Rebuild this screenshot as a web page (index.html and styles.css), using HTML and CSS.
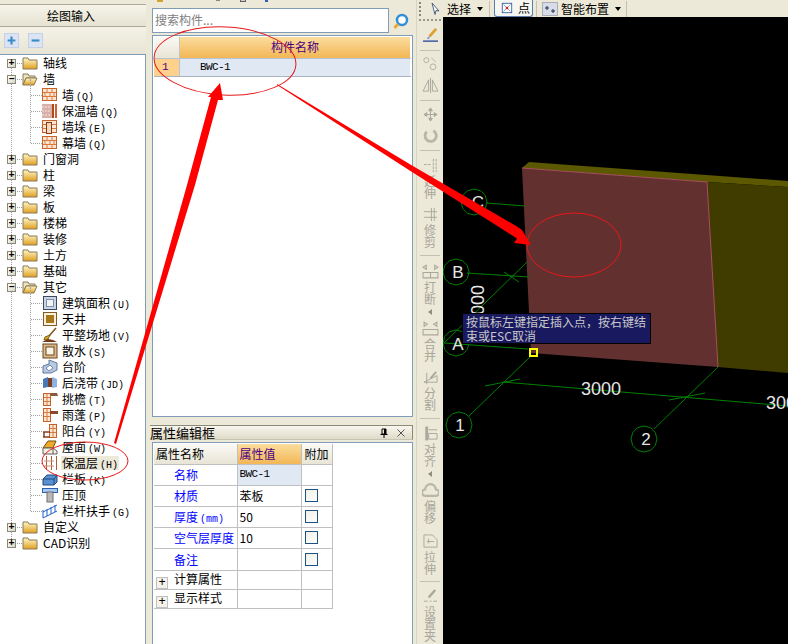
FILE: index.html
```html
<!DOCTYPE html>
<html lang="zh">
<head>
<meta charset="utf-8">
<title>绘图输入</title>
<link rel="stylesheet" href="styles.css">
</head>
<body>
<svg class="defs" width="0" height="0" aria-hidden="true">
  <defs>
    <linearGradient id="fold" x1="0" y1="0" x2="0" y2="1"><stop offset="0" stop-color="#fff6c8"/><stop offset="1" stop-color="#e0a020"/></linearGradient>
    <polygon id="oct" points="13,0 11.300,6.500 6.500,11.300 0,13 -6.500,11.300 -11.300,6.500 -13,0 -11.300,-6.500 -6.500,-11.300 0,-13 6.500,-11.300 11.300,-6.500"/>
    <symbol id="closed" viewBox="0 0 16 14"><path d="M1 2h5l1 2h8v9H1z" fill="url(#fold)" stroke="#8a7a58"/></symbol>
    <symbol id="open" viewBox="0 0 16 14"><path d="M1 2h5l1 2h6v2H4L1 13z" fill="#efe4c0" stroke="#8a7a58"/><path d="M4 6h11l-3 7H1z" fill="url(#fold)" stroke="#8a7a58"/></symbol>
    <symbol id="brick" viewBox="0 0 16 14"><rect x=".5" y=".5" width="14" height="12" fill="#fde6d2" stroke="#c8622a"/><path d="M1 4.500h13M1 8.500h13M5 1v3.500M10 1v3.500M3 4.500v4M8 4.500v4M12 4.500v4M5 8.500v4M10 8.500v4" stroke="#d87a40" fill="none"/></symbol>
    <symbol id="insul" viewBox="0 0 16 14"><rect x="0" y="0" width="10" height="14" fill="#d8b0a8"/><path d="M0 3h9M0 7h9M0 11h9" stroke="#f4e8e0" stroke-dasharray="2 1"/><rect x="10" y="0" width="2" height="14" fill="#b04818"/><rect x="13" y="0" width="2" height="14" fill="#d06030"/></symbol>
    <symbol id="pier" viewBox="0 0 16 14"><rect x=".5" y=".5" width="14" height="12" fill="#fde6d2" stroke="#c8622a"/><path d="M1 4.500h13M1 8.500h13" stroke="#d87a40"/><rect x="4.500" y="2.500" width="5" height="11" fill="#f4d8c0" stroke="#8a3a10"/></symbol>
    <symbol id="area" viewBox="0 0 16 16"><rect x="1.500" y="1.500" width="13" height="13" fill="#c8d4e8" stroke="#404860"/><rect x="4.500" y="4.500" width="7" height="7" fill="#f4f4f4" stroke="#8090a8"/></symbol>
    <symbol id="well" viewBox="0 0 16 16"><rect x="1.500" y="1.500" width="13" height="13" fill="#f8f0dc" stroke="#805a20"/><rect x="4" y="4" width="8" height="8" fill="#a87818"/></symbol>
    <symbol id="shovel" viewBox="0 0 16 16"><path d="M14 1L7 9" stroke="#805018" stroke-width="1.500"/><path d="M8 8L3 10l-1 3 4-1z" fill="#d8b020" stroke="#806010"/><path d="M0 15l6-3 5 1 4 2z" fill="#783818"/></symbol>
    <symbol id="apron" viewBox="0 0 16 16"><rect x="1" y="1" width="14" height="14" fill="#d8b890" stroke="#704818"/><rect x="4" y="4" width="8" height="8" fill="#f8f4e8" stroke="#704818"/></symbol>
    <symbol id="step" viewBox="0 0 16 16"><path d="M1 14V7l6-2V1l8 3v7l-6 3z" fill="#b8c8e0" stroke="#6078a0"/><path d="M4 9l4-3 3 3-4 3z" fill="#fff" stroke="#7088a8"/></symbol>
    <symbol id="post" viewBox="0 0 16 16"><path d="M1 4l5-2v10l-5 1z" fill="#4878b8"/><path d="M10 2l5 2v8l-5 1z" fill="#90b0e0"/><path d="M6 3h4v9H6z" fill="#784020"/></symbol>
    <symbol id="eave" viewBox="0 0 16 16"><rect x="1.500" y="2.500" width="7" height="12" fill="#fde6d2" stroke="#c8622a"/><path d="M2 6.500h6M2 10.500h6M5 3v3M5 7v3M5 11v3" stroke="#d87a40"/><path d="M8 2h7l1 3H9z" fill="#8a5a3a"/></symbol>
    <symbol id="canopy" viewBox="0 0 16 16"><rect x="1.500" y="1.500" width="7" height="13" fill="#fde6d2" stroke="#c8622a"/><path d="M2 5.500h6M2 9.500h6M5 2v3M5 6v3M5 10v4" stroke="#d87a40"/><rect x="8" y="4" width="8" height="3" fill="#8a4a2a"/></symbol>
    <symbol id="balcony" viewBox="0 0 16 16"><rect x="7.500" y="1.500" width="7" height="13" fill="#fde6d2" stroke="#c8622a"/><path d="M8 5.500h6M8 9.500h6M11 2v3M11 6v3M11 10v4" stroke="#d87a40"/><path d="M1 9h7M1 14h7M2 9v5" stroke="#884020" fill="none" stroke-width="1.500"/></symbol>
    <symbol id="roof" viewBox="0 0 16 16"><path d="M1 9l5-7h8l-3 7z" fill="#f0a828" stroke="#705010"/><path d="M1 9h10v6H1zM11 9l4 3v3h-4" fill="#f4f0e4" stroke="#606060"/></symbol>
    <symbol id="layer" viewBox="0 0 16 16"><path d="M4.500 1v14M9.500 1v14M14.500 1v14" stroke="#b05830" fill="none"/><path d="M2 6h5M7 6h5M2 11h5M7 11h5" stroke="#c89078" fill="none"/></symbol>
    <symbol id="board" viewBox="0 0 16 16"><path d="M1 8l4-4h10v7l-3 3H1z" fill="#5890d0" stroke="#204880"/><path d="M1 8h11v6M12 8l3-4" stroke="#204880" fill="none"/></symbol>
    <symbol id="cap" viewBox="0 0 16 16"><rect x="0.500" y="1.500" width="15" height="4" fill="#a8c8f0" stroke="#2860b0"/><rect x="5" y="5" width="6" height="10" fill="#b8b8b8" stroke="#707070"/></symbol>
    <symbol id="rail" viewBox="0 0 16 16"><path d="M1 15V7M1 9l14-7M5 13V6M9 11V4M13 9V2M1 15l14-7" stroke="#2060d0" fill="none"/></symbol>
    <symbol id="grabber" viewBox="0 0 12 16"><path d="M2 2l7 8-3-.500-1 4z" fill="#fff" stroke="#506080"/></symbol>
  </defs>
</svg>

<div class="app">
  <aside class="left">
    <div class="left-title">绘图输入</div>
    <div class="left-tools">
      <button class="sq-btn"><svg viewBox="0 0 15 15"><path d="M7.500 3v9M3 7.500h9" stroke="#3a8cc8" stroke-width="2.500"/></svg></button>
      <button class="sq-btn"><svg viewBox="0 0 15 15"><path d="M3 7.500h9" stroke="#3a8cc8" stroke-width="2.500"/></svg></button>
    </div>
    <div class="tree-box">
      <ul class="tree">
        <li class="row"><span class="exp">+</span><svg class="folder"><use href="#closed"/></svg><span class="label">轴线</span></li>
        <li><div class="row"><span class="exp">−</span><svg class="folder"><use href="#open"/></svg><span class="label">墙</span></div>
          <ul class="group">
            <li class="row leaf"><svg class="ico"><use href="#brick"/></svg><span class="label">墙<i>(Q)</i></span></li>
            <li class="row leaf"><svg class="ico"><use href="#insul"/></svg><span class="label">保温墙<i>(Q)</i></span></li>
            <li class="row leaf"><svg class="ico"><use href="#pier"/></svg><span class="label">墙垛<i>(E)</i></span></li>
            <li class="row leaf"><svg class="ico"><use href="#brick"/></svg><span class="label">幕墙<i>(Q)</i></span></li>
          </ul>
        </li>
        <li class="row"><span class="exp">+</span><svg class="folder"><use href="#closed"/></svg><span class="label">门窗洞</span></li>
        <li class="row"><span class="exp">+</span><svg class="folder"><use href="#closed"/></svg><span class="label">柱</span></li>
        <li class="row"><span class="exp">+</span><svg class="folder"><use href="#closed"/></svg><span class="label">梁</span></li>
        <li class="row"><span class="exp">+</span><svg class="folder"><use href="#closed"/></svg><span class="label">板</span></li>
        <li class="row"><span class="exp">+</span><svg class="folder"><use href="#closed"/></svg><span class="label">楼梯</span></li>
        <li class="row"><span class="exp">+</span><svg class="folder"><use href="#closed"/></svg><span class="label">装修</span></li>
        <li class="row"><span class="exp">+</span><svg class="folder"><use href="#closed"/></svg><span class="label">土方</span></li>
        <li class="row"><span class="exp">+</span><svg class="folder"><use href="#closed"/></svg><span class="label">基础</span></li>
        <li><div class="row"><span class="exp">−</span><svg class="folder"><use href="#open"/></svg><span class="label">其它</span></div>
          <ul class="group">
            <li class="row leaf"><svg class="ico"><use href="#area"/></svg><span class="label">建筑面积<i>(U)</i></span></li>
            <li class="row leaf"><svg class="ico"><use href="#well"/></svg><span class="label">天井</span></li>
            <li class="row leaf"><svg class="ico"><use href="#shovel"/></svg><span class="label">平整场地<i>(V)</i></span></li>
            <li class="row leaf"><svg class="ico"><use href="#apron"/></svg><span class="label">散水<i>(S)</i></span></li>
            <li class="row leaf"><svg class="ico"><use href="#step"/></svg><span class="label">台阶</span></li>
            <li class="row leaf"><svg class="ico"><use href="#post"/></svg><span class="label">后浇带<i>(JD)</i></span></li>
            <li class="row leaf"><svg class="ico"><use href="#eave"/></svg><span class="label">挑檐<i>(T)</i></span></li>
            <li class="row leaf"><svg class="ico"><use href="#canopy"/></svg><span class="label">雨蓬<i>(P)</i></span></li>
            <li class="row leaf"><svg class="ico"><use href="#balcony"/></svg><span class="label">阳台<i>(Y)</i></span></li>
            <li class="row leaf"><svg class="ico"><use href="#roof"/></svg><span class="label">屋面<i>(W)</i></span></li>
            <li class="row leaf"><svg class="ico"><use href="#layer"/></svg><span class="label selected">保温层<i>(H)</i></span></li>
            <li class="row leaf"><svg class="ico"><use href="#board"/></svg><span class="label">栏板<i>(K)</i></span></li>
            <li class="row leaf"><svg class="ico"><use href="#cap"/></svg><span class="label">压顶</span></li>
            <li class="row leaf"><svg class="ico"><use href="#rail"/></svg><span class="label">栏杆扶手<i>(G)</i></span></li>
          </ul>
        </li>
        <li class="row"><span class="exp">+</span><svg class="folder"><use href="#closed"/></svg><span class="label">自定义</span></li>
        <li class="row"><span class="exp">+</span><svg class="folder"><use href="#closed"/></svg><span class="label">CAD识别</span></li>
      </ul>
    </div>
  </aside>

  <main class="middle">
    <div class="mid-top"><span class="frag gold"></span><span class="frag grey"></span><span class="frag box"></span><span class="frag blue"></span></div>
    <div class="search-row">
      <div class="search">搜索构件...</div>
      <svg class="search-go" viewBox="0 0 18 18"><circle cx="10" cy="8" r="5" fill="#fff" stroke="#2f8fd8" stroke-width="2.500"/><path d="M6 12l-3.500 4" stroke="#e8a838" stroke-width="3"/></svg>
    </div>
    <div class="list-box">
      <div class="list-head"><div class="corner"></div><div class="col-name">构件名称</div></div>
      <div class="list-row"><div class="row-no">1</div><div class="row-name">BWC-1</div></div>
    </div>
    <div class="prop-title"><span>属性编辑框</span><span class="prop-ctl"><svg viewBox="0 0 10 10"><path d="M3 1h4v5H3zM1.500 6.500h7M5 7v3" fill="none" stroke="#000"/><path d="M6 1v5" stroke="#000" stroke-width="2"/></svg><svg viewBox="0 0 10 10"><path d="M1.500 1.500l7 7M8.500 1.500l-7 7" stroke="#555"/></svg></span></div>
    <div class="prop-box">
      <table class="props">
        <tr class="h"><th>属性名称</th><th class="on">属性值</th><th>附加</th></tr>
        <tr><td class="n">名称</td><td class="v sel">BWC-1</td><td></td></tr>
        <tr><td class="n">材质</td><td class="v">苯板</td><td><span class="chk"></span></td></tr>
        <tr><td class="n">厚度<i>(mm)</i></td><td class="v">50</td><td><span class="chk"></span></td></tr>
        <tr><td class="n">空气层厚度</td><td class="v">10</td><td><span class="chk"></span></td></tr>
        <tr class="tall"><td class="n">备注</td><td class="v"></td><td><span class="chk"></span></td></tr>
        <tr class="short"><td class="g"><span class="pm">+</span>计算属性</td><td></td><td></td></tr>
        <tr class="short"><td class="g"><span class="pm">+</span>显示样式</td><td></td><td></td></tr>
      </table>
    </div>
  </main>

  <section class="right">
    <div class="topbar">
      <span class="grip"></span>
      <svg class="top-ico" viewBox="0 0 12 16"><use href="#grabber"/></svg>
      <span class="top-txt">选择</span><span class="caret"></span>
      <span class="top-sep first-sep"></span>
      <span class="top-btn"><svg viewBox="0 0 14 14"><rect x="1.500" y="1.500" width="11" height="11" fill="#fff" stroke="#305890"/><path d="M3 3l8 8M11 3l-8 8" stroke="#7090c0"/><circle cx="7" cy="7" r="1.500" fill="#e02020"/></svg><span class="top-txt">点</span></span>
      <span class="top-sep second-sep"></span>
      <svg class="top-ico2" viewBox="0 0 16 14"><rect x=".5" y=".5" width="15" height="13" fill="#d8dce8" stroke="#707888" stroke-dasharray="1 1"/><path d="M5 4v4M3 6h4M11 7v4M9 9h4" stroke="#203050"/></svg>
      <span class="top-txt">智能布置</span><span class="caret"></span>
      <span class="top-sep last-sep"></span>
    </div>
    <div class="work">
      <div class="vbar">
        <span class="vgrip"></span>
        <svg class="v-ico m7" viewBox="0 0 18 16"><path d="M15 1L8 9" stroke="#e0a030" stroke-width="3"/><path d="M9 8l-4 3 2 1z" fill="#7090d0"/><path d="M1 14h16" stroke="#3050a0" stroke-width="1.500"/></svg>
        <span class="vsep m7"></span>
        <svg class="v-ico m5" viewBox="0 0 18 18"><circle cx="4" cy="5" r="3" fill="none" stroke="#aaa79c"/><circle cx="12" cy="13" r="3.500" fill="none" stroke="#aaa79c"/><path d="M10 2l5 5" stroke="#aaa79c"/></svg>
        <svg class="v-ico m7" viewBox="0 0 18 16"><path d="M7 2v12H1zM11 2v12h6z" fill="none" stroke="#aaa79c"/><path d="M9 0v16" stroke="#aaa79c"/></svg>
        <span class="vsep m7"></span>
        <svg class="v-ico m6" viewBox="0 0 16 16"><path d="M8 1v14M1 8h14M8 1L6 4h4zM8 15l-2-3h4zM1 8l3-2v4zM15 8l-3-2v4z" fill="#aaa79c" stroke="#aaa79c"/></svg>
        <svg class="v-ico m6" viewBox="0 0 16 16"><path d="M11 3a6 6 0 1 1-7 1" fill="none" stroke="#b8b5aa" stroke-width="3"/></svg>
        <span class="vsep m7"></span>
        <div class="tool m7"><svg class="v-ico" viewBox="0 0 16 16"><path d="M1 7h8M11 1v14M14 1v14" stroke="#aaa79c" stroke-dasharray="3 1" fill="none"/></svg><span class="vtext">延伸</span></div>
        <div class="tool m8"><svg class="v-ico" viewBox="0 0 16 16"><path d="M1 5h14M1 11h14M9 1v14M12 1v14" stroke="#aaa79c" fill="none"/></svg><span class="vtext">修剪</span></div>
        <span class="vsep m7"></span>
        <div class="tool m8"><svg class="v-ico" viewBox="0 0 16 14"><path d="M1 3l3-2v4zM15 3l-3-2v4zM1 8h14v5H1zM8 8v5" fill="none" stroke="#aaa79c"/></svg><span class="vtext">打断</span><span class="v-arrow"></span></div>
        <div class="tool m6"><svg class="v-ico" viewBox="0 0 16 14"><path d="M5 3L2 1v4zM11 3l3-2v4zM1 8h14v5H1z" fill="none" stroke="#aaa79c"/></svg><span class="vtext">合并</span></div>
        <div class="tool m8"><svg class="v-ico" viewBox="0 0 16 16"><path d="M1 13h14L15 6 1 13zM4 3v12" fill="none" stroke="#aaa79c"/><path d="M8 9l6-7" stroke="#aaa79c" stroke-width="2"/></svg><span class="vtext">分割</span></div>
        <span class="vsep m7"></span>
        <div class="tool m7"><svg class="v-ico" viewBox="0 0 16 16"><path d="M3 1v14h2V1z" fill="#aaa79c" stroke="#aaa79c"/><path d="M6 4h9M6 8h9v6H6z" fill="none" stroke="#aaa79c"/></svg><span class="vtext">对齐</span><span class="v-arrow"></span></div>
        <div class="tool m6"><svg class="v-ico" viewBox="0 0 16 14"><path d="M3 12a3 3 0 0 1 0-6 5 5 0 0 1 10 0 3 3 0 0 1 0 6z" fill="none" stroke="#b8b5aa" stroke-width="2"/></svg><span class="vtext">偏移</span></div>
        <div class="tool m10"><svg class="v-ico" viewBox="0 0 16 16"><path d="M1 1h9l5 5v8H1zM6 5v5M4 8h8" fill="none" stroke="#aaa79c"/></svg><span class="vtext">拉伸</span></div>
        <span class="vsep m6"></span>
        <div class="tool m7"><svg class="v-ico" viewBox="0 0 16 16"><path d="M13 1L6 9" stroke="#aaa79c" stroke-width="2.500"/><path d="M1 13h4M7 13h2M11 13h4" stroke="#aaa79c"/></svg><span class="vtext">设置夹</span></div>
      </div>
      <div class="canvas">
        <svg class="scene" viewBox="443 17 345 627" preserveAspectRatio="none">
          <rect x="443" y="17" width="345" height="627" fill="#000"/>
          <path d="M522 168L529 162L788 181V187L707 182z" fill="#5c5800"/>
          <path d="M707 182L788 187V373L718 367z" fill="#403c00"/>
          <path d="M522 168L707 182L718 367L531 353z" fill="#62302f"/>
          <path d="M522 168L707 182L718 367" fill="none" stroke="#a85060"/>
          <g class="grid">
            <path d="M486 203L525 206M467 273L529 277M444 343L528 349M527 262L444 343M530 357L469 416M718 367L654 429M503 382L788 406M485 386L520 379M669 400L705 393M504 272L519 282"/>
            <use href="#oct" x="474" y="202"/>
            <use href="#oct" x="456" y="272"/>
            <use href="#oct" x="456" y="343"/>
            <use href="#oct" x="459" y="425"/>
            <use href="#oct" x="644" y="439"/>
          </g>
          <g class="lbl">
            <text x="478" y="208">C</text>
            <text x="458" y="278">B</text>
            <text x="458" y="350">A</text>
            <text x="460" y="431">1</text>
            <text x="646" y="445">2</text>
            <text x="601" y="395" class="dim">3000</text>
            <text x="766" y="409" class="dim start">300</text>
            <text transform="translate(484 300) rotate(-90)" class="dim">000</text>
          </g>
          <rect x="530" y="349" width="7" height="7" fill="none" stroke="#ffff00" stroke-width="2"/>
        </svg>
        <div class="tip">按鼠标左键指定插入点，按右键结束或ESC取消</div>
      </div>
    </div>
  </section>

  <svg class="marks" viewBox="0 0 788 644">
    <ellipse cx="225" cy="61" rx="71" ry="34" transform="rotate(3 225 61)"/>
    <ellipse cx="574" cy="245" rx="47" ry="32"/>
    <ellipse cx="85" cy="461" rx="43" ry="19"/>
    <path class="fill" d="M220 83L223 100L218 100L195 185L116 444L114 443L187 185L211 97L208 97z"/>
    <path class="fill" d="M277 84L412 165.500L517 226.500L522 230L531 245L514 243L517 238.500L412 172L277 85z"/>
  </svg>
</div>
</body>
</html>
```

FILE: styles.css
```css
* { box-sizing: border-box; }
html, body { margin: 0; padding: 0; }
body { width: 788px; height: 644px; overflow: hidden; background: #ece9d8; font-family: "Noto Sans CJK SC", "Liberation Sans", sans-serif; font-size: 12px; color: #000; }
.defs { position: absolute; }
.app { position: relative; display: flex; width: 788px; height: 644px; overflow: hidden; background: #ece9d8; }
i { font-style: normal; font-family: "Liberation Mono", monospace; font-size: 10px; line-height: 1; margin-left: 2px; }

.left { width: 146px; flex: none; display: flex; flex-direction: column; height: 644px; }
.left-title { margin-top: 4px; height: 23px; border-top: 1px solid #aca899; border-bottom: 1px solid #aca899; padding-right: 4px; text-align: center; line-height: 21px; background: linear-gradient(#f6f4ea, #e6e3d2); }
.left-tools { height: 27px; display: flex; gap: 9px; padding: 6px 0 0 4px; background: linear-gradient(#f4f2e6, #e8e5d6); }
.sq-btn { width: 15px; height: 15px; padding: 0; border: 1px solid #c4d0e8; background: #dce4f4; display: block; }
.sq-btn svg { display: block; width: 13px; height: 13px; }
.tree-box { flex: 1; background: #fff; border-top: 1px solid #7f9db9; border-right: 1px solid #7f9db9; }
.tree, .group { list-style: none; margin: 0; padding: 0; position: relative; }
.tree::before { content: ""; position: absolute; left: 11px; top: 8px; bottom: 8px; border-left: 1px dotted #a0a0a0; }
.group::before { content: ""; position: absolute; left: 30px; top: -8px; bottom: 8px; border-left: 1px dotted #a0a0a0; }
.row { position: relative; display: flex; align-items: center; height: 16px; padding-left: 7px; }
.row.leaf { padding-left: 42px; }
.row::before { content: ""; position: absolute; left: 12px; top: 8px; width: 10px; border-top: 1px dotted #a0a0a0; }
.row.leaf::before { left: 31px; width: 11px; }
.exp { position: relative; width: 9px; height: 9px; border: 1px solid #8a8a7a; background: linear-gradient(135deg, #fff, #d8d4c4); font: 10px/7px "Liberation Mono", monospace; text-align: center; flex: none; margin-right: 6px; font-weight: bold; }
.folder { position: relative; width: 16px; height: 14px; flex: none; margin-right: 4px; }
.ico { position: relative; width: 16px; height: 16px; flex: none; margin-right: 3px; }
.label { line-height: 14px; height: 14px; padding: 0 1px; white-space: nowrap; }
.selected { background: #ece9d8; }

.middle { flex: none; margin-left: 3px; width: 267px; height: 644px; display: flex; flex-direction: column; padding-left: 1px; }
.mid-top { display: flex; height: 8px; align-items: flex-start; flex: none; }
.frag { display: block; flex: none; }
.gold { width: 6px; height: 2px; margin-left: 7px; background: #d8a030; }
.grey { width: 4px; height: 1px; margin-left: 53px; background: #8a8878; }
.box { width: 6px; height: 2px; margin-left: 20px; background: #d0d0c8; border: 1px solid #606060; border-top: 0; }
.blue { width: 3px; height: 2px; margin-left: 19px; background: #3060c0; }
.search-row { display: flex; align-items: center; gap: 3px; height: 25px; margin: 0 0 0 2px; flex: none; }
.search { width: 237px; height: 25px; border: 1px solid #7f9db9; background: #fff; color: #808080; line-height: 22px; padding-left: 2px; font-size: 12px; }
.search-go { width: 18px; height: 18px; }
.list-box { margin: 2px 3px 0 2px; height: 382px; border: 1px solid #7f9db9; background: #fff; padding: 1px; flex: none; }
.list-head, .list-row { display: flex; }
.corner { width: 26px; height: 21px; background: linear-gradient(#faf9f4, #e8e5d6); border-right: 1px solid #c8c4b8; }
.col-name { width: 230px; height: 21px; background: linear-gradient(#fbdd9e, #f2b656); text-align: center; color: #4b0082; line-height: 20px; }
.list-row { height: 19px; border-top: 1px solid #b8c4d4; border-bottom: 1px solid #aab4c4; }
.row-no { width: 26px; background: #fdd08c; color: #4b0082; padding-left: 8px; line-height: 16px; border-right: 1px solid #b8c4d4; font-family: "Liberation Mono", monospace; font-size: 11px; }
.row-name { width: 230px; background: #e0e8f4; padding-left: 20px; font-family: "Liberation Mono", monospace; font-size: 11px; letter-spacing: -.6px; line-height: 17px; }
.prop-title { margin: 8px 3px 0 0; height: 15px; flex: none; border: 1px solid #8a8878; border-bottom-color: #c8c4b4; border-left-width: 0; background: linear-gradient(#f8f6ee, #dedbc8); display: flex; justify-content: space-between; line-height: 13px; font-size: 13px; }
.prop-ctl { display: flex; gap: 7px; padding: 2px 6px 0 0; }
.prop-ctl svg { width: 10px; height: 10px; }
.prop-box { flex: 1; margin: 2px 3px 0 2px; border: 1px solid #7f9db9; border-bottom: 0; background: #fff; padding: 1px; }
.props { border-collapse: collapse; table-layout: fixed; width: 178px; font-size: 12px; line-height: 15px; }
.props th, .props td { border: 1px solid #c0c0c0; padding: 0; height: 21px; overflow: hidden; white-space: nowrap; }
.props tr:first-child th { border-top: 0; height: 20px; }
.props tr > :first-child { border-left: 0; width: 83px; }
.props tr > :nth-child(2) { width: 64px; }
.props tr > :nth-child(3) { width: 31px; text-align: center; }
.props th { font-weight: normal; text-align: left; padding-left: 2px; background: linear-gradient(#faf9f4, #e8e5d6); }
.props th.on { background: linear-gradient(#fbdd9e, #f2b656); color: #4b0082; }
.props tr > th:nth-child(3) { padding-left: 0; }
.n { color: #0000ff; padding-left: 20px !important; }
.n i { color: #0000ff; }
.v { padding-left: 2px !important; }
.sel { background: #e0e8f4; font-family: "Liberation Mono", monospace; font-size: 11px !important; letter-spacing: -.6px; }
.tall td { height: 22px; }
.props .short td { height: 19px; }
.chk { display: block; width: 13px; height: 13px; margin: 0 auto 0 3px; border: 1px solid #1c5180; background: linear-gradient(135deg, #f0efe6, #fff); }
.g { padding-left: 2px !important; }
.pm { display: inline-block; width: 12px; height: 12px; border: 1px solid #c0c0c0; background: #f4f2ea; font: 12px/10px "Liberation Mono", monospace; text-align: center; margin-right: 6px; vertical-align: -2px; }

.right { flex: 1; display: flex; flex-direction: column; height: 644px; min-width: 0; border-left: 1px solid #d8d5c5; }
.topbar { height: 17px; display: flex; align-items: center; background: #ece9d8; padding-left: 2px; flex: none; }
.grip { width: 2px; height: 14px; margin-right: 9px; background: repeating-linear-gradient(#8a8878 0 2px, transparent 2px 4px); }
.top-ico { width: 12px; height: 16px; margin-right: 5px; }
.top-txt { line-height: 14px; }
.caret { width: 0; height: 0; margin-left: 6px; border: 3px solid transparent; border-top: 4px solid #000; border-bottom: 0; }
.top-sep { width: 1px; height: 16px; background: #c4c1b0; }
.first-sep { margin: 0 4px 0 6px; }
.second-sep { margin: 0 5px 0 3px; }
.last-sep { margin-left: 5px; }
.top-btn { display: flex; align-items: center; gap: 5px; width: 39px; height: 17px; padding-left: 6px; background: #f6f6f2; border: 1px solid #5a7ea8; border-top: 0; border-radius: 0 0 3px 3px; }
.top-btn svg { width: 12px; height: 12px; flex: none; }
.top-ico2 { width: 16px; height: 14px; margin-right: 3px; }
.work { flex: 1; display: flex; min-height: 0; }
.vbar { width: 26px; flex: none; background: #ece9d8; display: flex; flex-direction: column; align-items: center; overflow: hidden; }
.vgrip { width: 22px; height: 2px; margin-top: 2px; background: repeating-linear-gradient(90deg, #9a9888 0 2px, transparent 2px 4px); flex: none; }
.v-ico { width: 17px; height: 15px; flex: none; display: block; }
.m5 { margin-top: 5px; }
.m6 { margin-top: 6px; }
.m7 { margin-top: 7px; }
.m8 { margin-top: 8px; }
.m10 { margin-top: 10px; }
.vsep { width: 20px; height: 1px; background: #c4c1b0; flex: none; }
.tool { display: flex; flex-direction: column; align-items: center; flex: none; }
.vtext { display: block; width: 12px; color: #a8a59a; line-height: 12px; text-align: center; word-break: break-all; margin-top: 2px; font-size: 12px; }
.v-arrow { width: 0; height: 0; margin-top: 4px; border: 3px solid transparent; border-right: 4px solid #908d80; border-left: 0; }
.canvas { flex: 1; position: relative; background: #000; min-width: 0; }
.scene { display: block; width: 100%; height: 100%; }
.grid { fill: none; stroke: #008000; stroke-width: 1; }
.lbl { fill: #e6e6e6; font-family: "Liberation Sans", sans-serif; font-size: 17px; text-anchor: middle; }
.dim { font-size: 18px; }
.start { text-anchor: start; }
.tip { position: absolute; left: 19px; top: 296px; width: 189px; height: 31px; padding: 1px 2px 0 3px; background: #191960; border: 1px solid #000; color: #c8c8c8; font-size: 12px; line-height: 14px; }

.marks { position: absolute; left: 0; top: 0; width: 788px; height: 644px; pointer-events: none; fill: none; stroke: #e81818; stroke-width: 1; }
.marks .fill { fill: #ff0000; stroke: none; }
```
